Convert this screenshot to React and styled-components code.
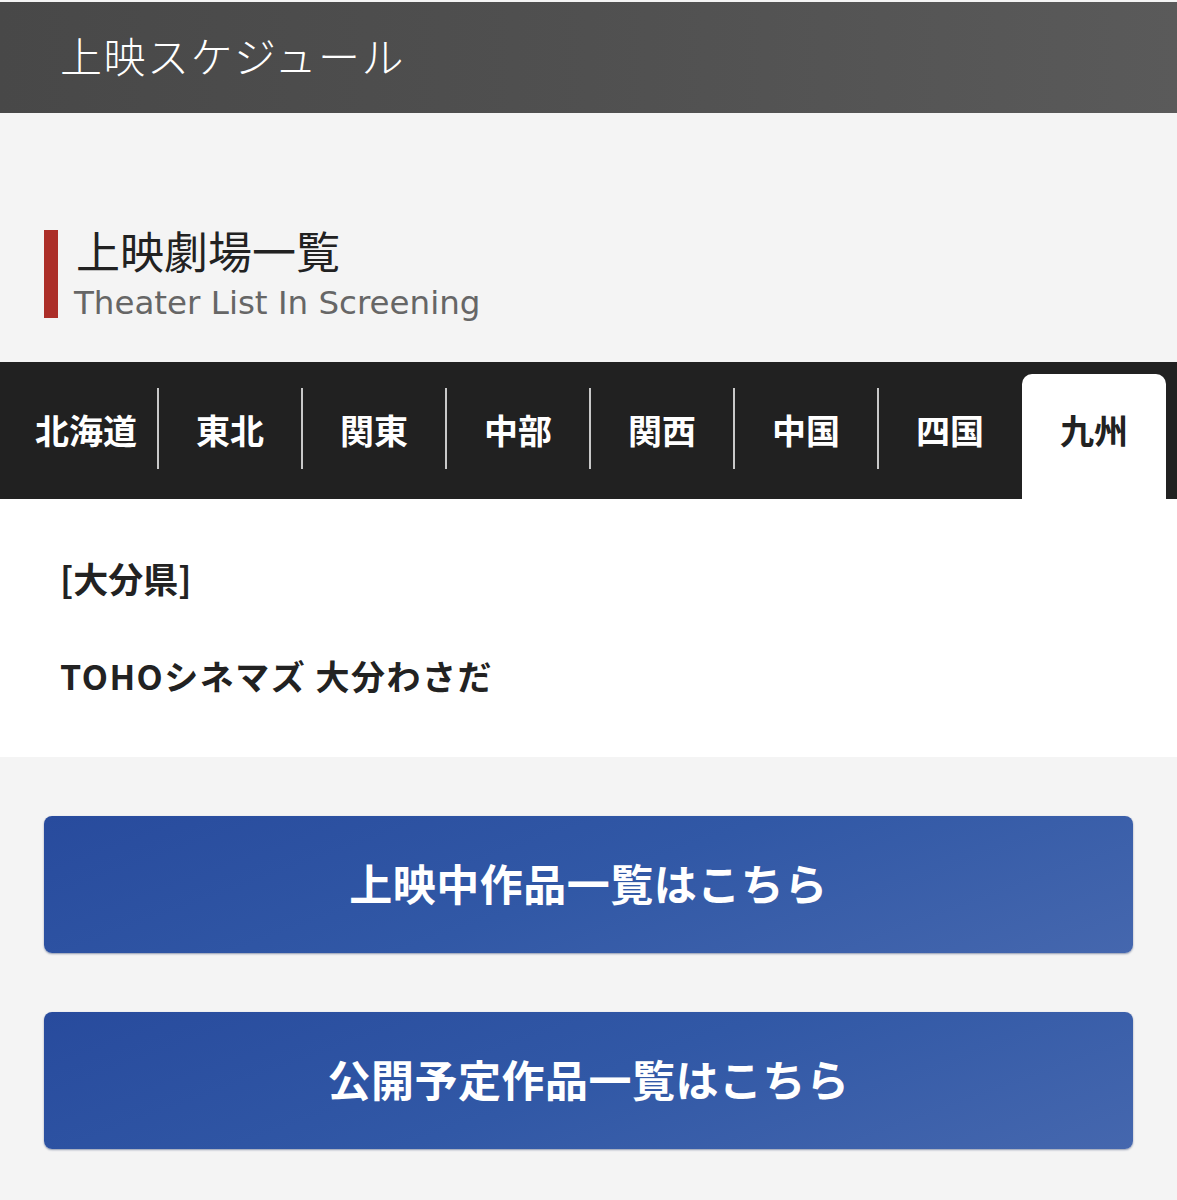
import React from 'react';
import styled, { createGlobalStyle } from 'styled-components';

const GlobalStyle = createGlobalStyle`
  html, body {
    margin: 0;
    padding: 0;
    background: #f4f4f4;
  }
  body {
    font-family: "Noto Sans CJK JP", "Noto Sans", sans-serif;
    color: #222;
  }
`;

const regions = ['北海道', '東北', '関東', '中部', '関西', '中国', '四国', '九州'];
const activeRegion = '九州';

const Page = styled.div`
  width: 1177px;
  padding-top: 2px;
  background: #f4f4f4;
`;

const Header = styled.header`
  height: 111px;
  display: flex;
  align-items: center;
  padding-left: 60px;
  box-sizing: border-box;
  background: linear-gradient(90deg, #484848 0%, #505050 50%, #5a5a5a 100%);
`;

const HeaderTitle = styled.h1`
  margin: 0 0 6px;
  font-size: 42px;
  font-weight: 300;
  line-height: 50px;
  color: #fff;
  letter-spacing: 1.5px;
`;

const Intro = styled.section`
  padding: 117px 44px 44px;
`;

const SectionHeading = styled.div`
  display: flex;
  align-items: flex-start;
  gap: 18px;
  height: 88px;
`;

const HeadingBar = styled.span`
  flex: none;
  width: 14px;
  height: 88px;
  background: #ac2e28;
`;

const HeadingText = styled.div`
  display: flex;
  flex-direction: column;
`;

const HeadingJa = styled.h2`
  margin: 0;
  font-size: 44px;
  font-weight: 400;
  line-height: 40px;
  color: #222;
`;

const HeadingEn = styled.span`
  font-family: "DejaVu Sans", Verdana, sans-serif;
  font-size: 32.5px;
  line-height: 66px;
  color: #666;
  margin-left: -2px;
  white-space: nowrap;
`;

const TabBar = styled.nav`
  display: flex;
  height: 137px;
  padding: 0 11px 0 14px;
  background: #212121;
`;

const Tab = styled.div`
  position: relative;
  width: 144px;
  display: flex;
  align-items: center;
  justify-content: center;
  box-sizing: border-box;
  margin-top: ${(p) => (p.$active ? '12px' : '0')};
  padding-bottom: ${(p) => (p.$active ? '14px' : '2px')};
  font-size: 34px;
  font-weight: 700;
  color: ${(p) => (p.$active ? '#222' : '#fff')};
  background: ${(p) => (p.$active ? '#fff' : 'transparent')};
  border-radius: ${(p) => (p.$active ? '10px 10px 0 0' : '0')};

  &::after {
    content: '';
    display: ${(p) => (p.$divider ? 'block' : 'none')};
    position: absolute;
    right: -1px;
    top: 26px;
    width: 2px;
    height: 81px;
    background: #c8c8c8;
  }
`;

const Content = styled.section`
  background: #fff;
  padding: 59px 60px 61px;
  display: flex;
  flex-direction: column;
  gap: 58px;
`;

const Prefecture = styled.div`
  font-size: 35px;
  font-weight: 700;
  line-height: 40px;
  color: #222;
`;

const Theater = styled.div`
  font-size: 34px;
  font-weight: 700;
  line-height: 40px;
  letter-spacing: 1.5px;
  color: #222;
`;

const Buttons = styled.div`
  display: flex;
  flex-direction: column;
  gap: 59px;
  padding: 59px 44px 51px;
`;

const LinkButton = styled.a`
  display: flex;
  align-items: center;
  justify-content: center;
  height: 137px;
  padding-bottom: 5px;
  border-radius: 8px;
  background: linear-gradient(160deg, #284b9d 0%, #3158a6 50%, #4567ae 100%);
  box-shadow: 0 1px 2px rgba(20, 40, 90, 0.45);
  color: #fff;
  font-size: 43px;
  font-weight: 700;
  text-decoration: none;
  letter-spacing: 0.5px;
  box-sizing: border-box;
`;

export default function App() {
  return (
    <Page>
      <GlobalStyle />
      <Header>
        <HeaderTitle>上映スケジュール</HeaderTitle>
      </Header>
      <Intro>
        <SectionHeading>
          <HeadingBar />
          <HeadingText>
            <HeadingJa>上映劇場一覧</HeadingJa>
            <HeadingEn>Theater List In Screening</HeadingEn>
          </HeadingText>
        </SectionHeading>
      </Intro>
      <TabBar>
        {regions.map((r, i) => {
          const active = r === activeRegion;
          const nextActive = regions[i + 1] === activeRegion;
          return (
            <Tab key={r} $active={active} $divider={!active && !nextActive && i < regions.length - 1}>
              {r}
            </Tab>
          );
        })}
      </TabBar>
      <Content>
        <Prefecture>[大分県]</Prefecture>
        <Theater>TOHOシネマズ 大分わさだ</Theater>
      </Content>
      <Buttons>
        <LinkButton href="#">上映中作品一覧はこちら</LinkButton>
        <LinkButton href="#">公開予定作品一覧はこちら</LinkButton>
      </Buttons>
    </Page>
  );
}
